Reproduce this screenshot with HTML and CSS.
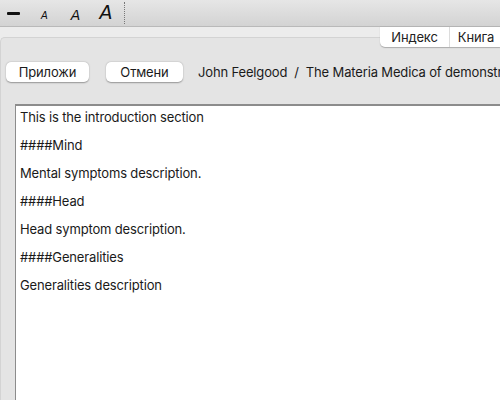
FILE: index.html
```html
<!DOCTYPE html>
<html>
<head>
<meta charset="utf-8">
<link rel="stylesheet" href="styles.css">
</head>
<body>
<div class="toolbar">
  <span class="tb-item minus"><span class="bar"></span></span>
  <span class="tb-item a a1">A</span>
  <span class="tb-item a a2">A</span>
  <span class="tb-item a a3">A</span>
  <span class="sep"></span>
</div>
<div class="band">
  <div class="tabs">
    <span class="tab">Индекс</span>
    <span class="tab">Книга</span>
  </div>
</div>
<div class="panel">
  <div class="actions">
    <button class="btn b1">Приложи</button>
    <button class="btn b2">Отмени</button>
    <span class="crumb">John Feelgood&nbsp;&nbsp;/&nbsp;&nbsp;The Materia Medica of demonstration</span>
  </div>
  <div class="editor">
    <p>This is the introduction section</p>
    <p>####Mind</p>
    <p>Mental symptoms description.</p>
    <p>####Head</p>
    <p>Head symptom description.</p>
    <p>####Generalities</p>
    <p>Generalities description</p>
  </div>
</div>
</body>
</html>
```
FILE: styles.css
```css
html, body {
  margin: 0;
  padding: 0;
  width: 500px;
  height: 400px;
  overflow: hidden;
  background: #ececec;
  font-family: "Inter", "Liberation Sans", sans-serif;
  font-size: 13px;
  letter-spacing: -0.15px;
  color: #1a1a1a;
}
.toolbar {
  height: 27px;
  box-sizing: border-box;
  border-bottom: 1px solid #b9b9b9;
  background: linear-gradient(#e6e6e6, #d3d3d3);
  display: flex;
  align-items: center;
  position: relative;
}
.tb-item {
  display: flex;
  align-items: center;
  justify-content: center;
}
.minus {
  width: 13px;
  margin-left: 7px;
  height: 20px;
}
.bar {
  display: block;
  width: 13px;
  height: 3px;
  background: #111;
  border-radius: 1px;
}
.a {
  font-style: italic;
  color: #111;
  font-family: "DejaVu Sans", sans-serif;
  line-height: 1;
  letter-spacing: 0;
}
.a1 { font-size: 10px; margin-left: 21px; margin-top: 5px; }
.a2 { font-size: 14px; margin-left: 23px; margin-top: 3px; }
.a3 { font-size: 19px; margin-left: 19px; margin-top: -1px; }
.sep {
  width: 0;
  height: 22px;
  border-left: 1px dotted #777;
  margin-left: 12px;
}
.band {
  height: 10px;
  position: relative;
}
.tabs {
  position: absolute;
  right: 0;
  top: 0;
  height: 20px;
  width: 120px;
  display: flex;
  background: #fff;
  border-bottom-left-radius: 5px;
  box-shadow: 0 0.5px 1px rgba(0,0,0,0.25);
  z-index: 2;
}
.tab {
  display: flex;
  align-items: center;
  justify-content: center;
  font-size: 13px;
  color: #222;
}
.tab:first-child {
  width: 69px;
  border-right: 1px solid #dcdcdc;
}
.tab:last-child { flex: 1; padding-left: 2px; }
.panel {
  background: #e4e4e4;
  border-top: 1px solid #d3d3d3;
  border-left: 1px solid #d3d3d3;
  border-top-left-radius: 5px;
  height: 363px;
  box-sizing: border-box;
}
.actions {
  display: flex;
  align-items: center;
  padding: 24px 0 0 5px;
  height: 20px;
  white-space: nowrap;
}
.btn {
  font-family: inherit;
  font-size: 13px;
  letter-spacing: inherit;
  color: #1a1a1a;
  background: #fff;
  border: none;
  border-radius: 5px;
  height: 20px;
  padding: 0;
  flex-shrink: 0;
  box-shadow: 0 0.5px 1.5px rgba(0,0,0,0.35);
}
.b1 { width: 83px; }
.b2 { width: 77px; margin-left: 17px; }
.crumb {
  margin-left: 15px;
  min-width: 0;
  overflow: hidden;
}
.editor {
  margin: 22px 0 0 14px;
  background: #fff;
  border-left: 1px solid #8c8c8c;
  border-top: 2px solid #8c8c8c;
  height: 300px;
  padding: 3px 0 0 4px;
}
.editor p {
  margin: 0;
  height: 28px;
  line-height: 16px;
}
```
